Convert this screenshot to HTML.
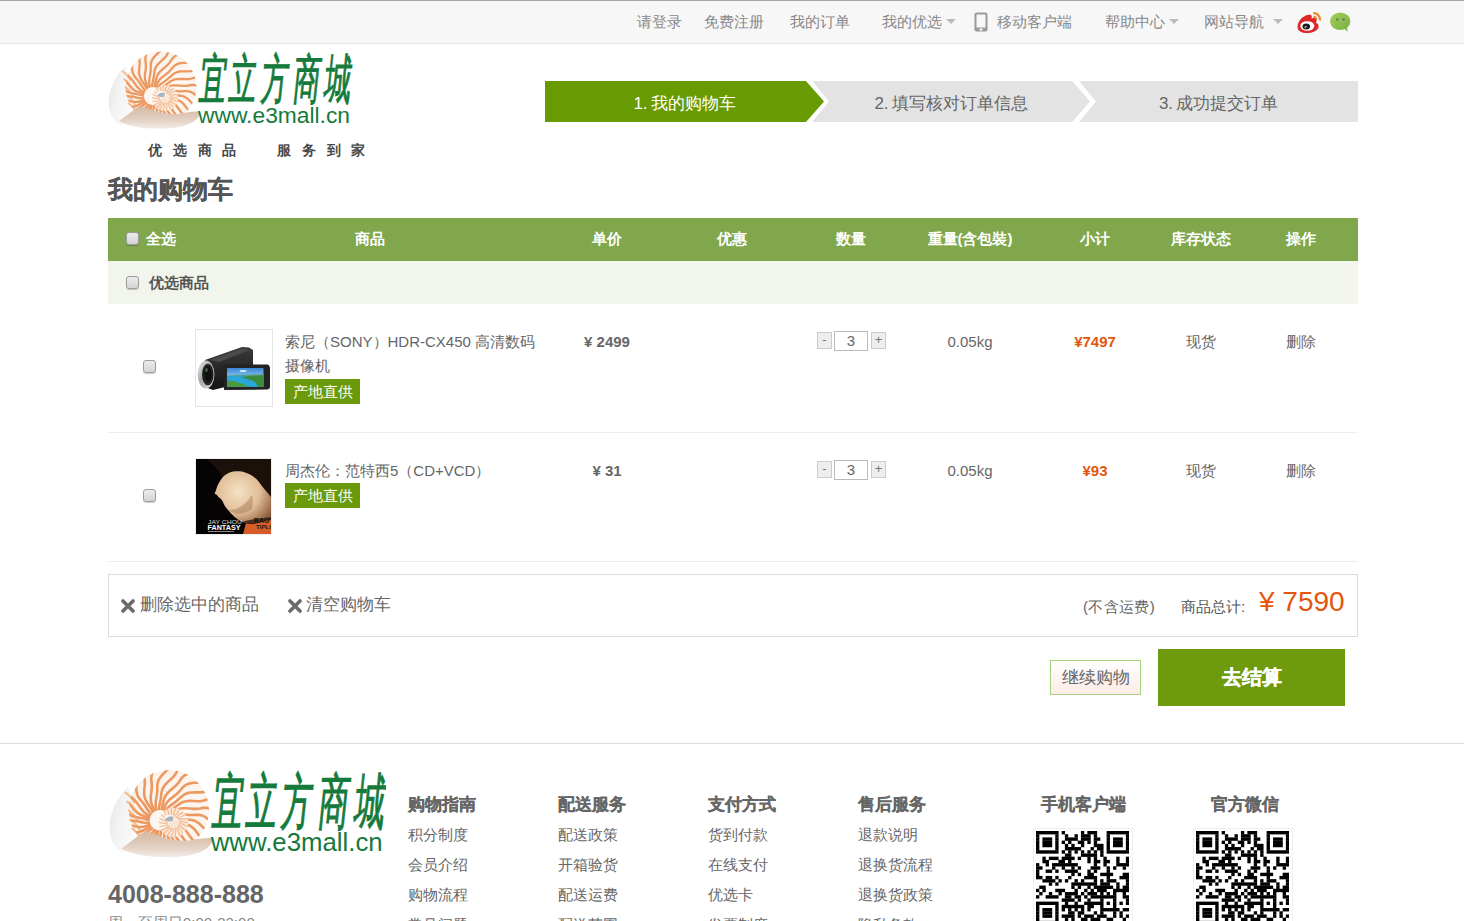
<!DOCTYPE html>
<html><head><meta charset="utf-8">
<style>
*{margin:0;padding:0;box-sizing:border-box}
html,body{width:1464px;height:921px;overflow:hidden;background:#fff}
body{position:relative;font-family:"Liberation Sans",sans-serif;color:#666;font-size:14px}
.a{position:absolute;white-space:nowrap}
.topbar{position:absolute;left:0;top:0;width:1464px;height:44px;background:#f7f7f7;border-top:1px solid #a8a8a8;border-bottom:1px solid #e6e6e6}
.tb{position:absolute;top:0;height:43px;line-height:43px;font-size:15px;color:#888}
.arr{position:absolute;width:0;height:0;border-left:5px solid transparent;border-right:5px solid transparent;border-top:5px solid #bbb}
.hd{position:absolute;top:216.5px;height:43px;line-height:43px;color:#fff;font-weight:bold;font-size:15px;white-space:nowrap}
.cb{position:absolute;width:13px;height:13px;border:1px solid #9c9c9c;border-radius:3px;background:linear-gradient(#ececec,#d4d4d4);box-shadow:0 1px 1px rgba(0,0,0,.2)}
.c{position:absolute;white-space:nowrap;text-align:center}
.tag{position:absolute;width:75px;height:25px;background:#6a9a0b;color:#fff;font-size:15px;line-height:25px;text-align:center}
.qbtn{position:absolute;width:15px;height:17px;background:#eee;border:1px solid #ccc;font-size:13px;line-height:14px;text-align:center;color:#777}
.qin{position:absolute;width:34px;height:20px;border:1px solid #bbb;background:#fff;font-size:15px;line-height:18px;text-align:center;color:#666}
.fh{-webkit-text-stroke:0.2px #666;position:absolute;top:791px;font-size:17px;font-weight:bold;color:#666;line-height:28px}
.fi{position:absolute;font-size:15px;color:#666;line-height:30px}
</style></head><body>

<!-- top bar -->
<div class="topbar"></div>
<div class="tb" style="left:637px">请登录</div>
<div class="tb" style="left:704px">免费注册</div>
<div class="tb" style="left:790px">我的订单</div>
<div class="tb" style="left:882px">我的优选</div>
<div class="arr" style="left:946px;top:19px"></div>
<svg class="a" style="left:974px;top:12px" width="14" height="20" viewBox="0 0 14 20"><rect x="0.5" y="0.5" width="13" height="19" rx="2" fill="#999"/><rect x="2.5" y="2.5" width="9" height="13" fill="#f7f7f7"/><rect x="5.5" y="16.5" width="3" height="2" fill="#f7f7f7"/></svg>
<div class="tb" style="left:997px">移动客户端</div>
<div class="tb" style="left:1105px">帮助中心</div>
<div class="arr" style="left:1169px;top:19px"></div>
<div class="tb" style="left:1204px">网站导航</div>
<div class="arr" style="left:1273px;top:19px"></div>
<!-- weibo -->
<svg class="a" style="left:1297px;top:11px" width="25" height="23" viewBox="0 0 25 23">
<path d="M3 9 C6 5 11 3 14 4 C15 4.5 15 6 14.5 7.5 C16.5 6.5 19 6.5 19.5 8.5 C20 10 19 11.5 19 12 C21 12.5 22 14 21.5 16.5 C20.5 20 15 22 10 22 C5 22 0.5 20 0.5 16 C0.5 13.5 1.5 11 3 9Z" fill="#dc2a2a"/>
<ellipse cx="10.3" cy="15" rx="7" ry="4.8" fill="#fff"/>
<ellipse cx="9.3" cy="15.6" rx="3.8" ry="3" fill="#1e1e1e"/>
<ellipse cx="8.6" cy="16" rx="1.3" ry="0.6" fill="#fff" transform="rotate(-25 8.6 16)"/>
<path d="M16.3 2.2 A6.3 6.3 0 0 1 23 9.5" stroke="#ec8a2c" stroke-width="2.2" fill="none"/>
<path d="M16.3 5.6 A3 3 0 0 1 19.6 8.8" stroke="#ec8a2c" stroke-width="1.8" fill="none"/>
</svg>
<!-- wechat -->
<svg class="a" style="left:1330px;top:12px" width="22" height="21" viewBox="0 0 22 21">
<defs><linearGradient id="wcg" x1="0" y1="0" x2="1" y2="1"><stop offset="0" stop-color="#a2d055"/><stop offset="1" stop-color="#78b044"/></linearGradient></defs>
<ellipse cx="10.2" cy="9.2" rx="10.1" ry="8.8" fill="url(#wcg)"/>
<path d="M14 16 L17.5 19.8 L17 15Z" fill="#7ab244"/>
<ellipse cx="7.2" cy="7.5" rx="1.3" ry="1.2" fill="#6c7a64"/><ellipse cx="13.6" cy="7.5" rx="1.3" ry="1.2" fill="#6c7a64"/>
</svg>

<!-- logo placeholder -->
<svg class="a" style="left:108px;top:49px" width="245" height="82" viewBox="0 0 245 82"><defs><radialGradient id="wh" cx="0.55" cy="0.5" r="0.6"><stop offset="0" stop-color="#fffaf4"/><stop offset="0.85" stop-color="#fbf3ec"/><stop offset="1" stop-color="#f4e2d4"/></radialGradient><linearGradient id="bod" x1="0" y1="0" x2="1" y2="0.3"><stop offset="0" stop-color="#e4e4e4"/><stop offset="0.35" stop-color="#f3f3f3"/><stop offset="1" stop-color="#ffffff"/></linearGradient><linearGradient id="sand" x1="0" y1="0" x2="0" y2="1"><stop offset="0" stop-color="#d6b8a2"/><stop offset="0.6" stop-color="#e2d0c3"/><stop offset="1" stop-color="#f3ede8"/></linearGradient><clipPath id="wc"><circle cx="53.0" cy="38.0" r="35.5"/></clipPath><filter id="sb" x="-5%" y="-5%" width="110%" height="110%"><feGaussianBlur stdDeviation="0.45"/></filter></defs><g filter="url(#sb)"><path d="M17 17 C6 28 -1 44 1 58 C2 68 8 74 13 76 L40 62 C30 50 24 36 17 17Z" fill="url(#bod)"/><circle cx="53.0" cy="38.0" r="35.5" fill="url(#wh)"/><g clip-path="url(#wc)"><path d="M54.0 47.0 L56.8 47.7 L59.5 48.5 L62.3 49.2 L65.0 49.8 L67.7 50.4 L70.4 51.3 L73.0 52.7 L75.4 54.8 L77.6 57.5 L79.6 60.2 L81.6 62.5 L83.9 64.4 L86.3 65.9 L88.6 67.6 L90.6 69.9" stroke="#ec9860" stroke-width="2.3" fill="none" stroke-linejoin="round"/><path d="M53.7 49.2 L56.4 50.1 L59.1 51.0 L61.7 51.9 L64.3 53.1 L66.6 54.9 L68.7 57.1 L70.6 59.7 L72.4 62.3 L74.3 64.6 L76.4 66.5 L78.6 68.3 L80.7 70.3 L82.2 73.0 L83.2 76.4 L83.5 80.4" stroke="#ec9860" stroke-width="2.3" fill="none" stroke-linejoin="round"/><path d="M53.3 50.6 L55.8 51.8 L58.1 53.4 L60.3 55.3 L62.2 57.6 L63.8 60.2 L65.5 62.7 L67.2 65.0 L69.2 67.0 L71.2 69.0 L72.9 71.4 L74.0 74.3 L74.5 77.7 L74.5 81.5 L74.3 85.3 L74.6 88.6" stroke="#ec9860" stroke-width="2.3" fill="none" stroke-linejoin="round"/><path d="M52.4 52.1 L54.4 54.1 L56.1 56.5 L57.6 59.0 L59.1 61.4 L60.8 63.8 L62.5 66.0 L64.2 68.2 L65.5 70.8 L66.2 73.8 L66.3 77.2 L66.0 80.8 L65.7 84.2 L65.9 87.3 L66.6 90.1 L67.5 92.8" stroke="#ec9860" stroke-width="2.3" fill="none" stroke-linejoin="round"/><path d="M50.9 53.8 L52.3 56.3 L53.7 58.8 L55.1 61.2 L56.6 63.6 L57.9 66.0 L58.9 68.8 L59.2 71.8 L59.0 75.1 L58.5 78.4 L58.2 81.6 L58.3 84.5 L58.8 87.3 L59.3 90.1 L59.3 93.0 L58.3 96.2" stroke="#ec9860" stroke-width="2.3" fill="none" stroke-linejoin="round"/><path d="M49.3 54.9 L50.5 57.4 L51.7 60.0 L52.7 62.6 L53.3 65.4 L53.3 68.4 L52.9 71.6 L52.3 74.6 L51.9 77.6 L51.9 80.5 L52.2 83.3 L52.3 86.1 L51.7 89.1 L50.2 92.1 L47.9 95.1 L45.1 98.0" stroke="#ec9860" stroke-width="2.3" fill="none" stroke-linejoin="round"/><path d="M48.0 55.5 L48.7 58.2 L49.0 61.1 L48.8 64.0 L48.3 66.9 L47.6 69.9 L47.1 72.7 L46.9 75.5 L46.9 78.3 L46.5 81.2 L45.5 84.0 L43.7 86.8 L41.1 89.4 L38.4 91.9 L36.0 94.4 L34.3 96.9" stroke="#ec9860" stroke-width="2.3" fill="none" stroke-linejoin="round"/><path d="M46.1 55.9 L45.8 58.8 L45.2 61.6 L44.5 64.4 L43.9 67.2 L43.5 69.9 L43.0 72.7 L42.3 75.5 L40.9 78.1 L38.8 80.6 L36.1 82.9 L33.5 85.1 L31.2 87.3 L29.6 89.7 L28.2 92.2 L26.7 94.6" stroke="#ec9860" stroke-width="2.3" fill="none" stroke-linejoin="round"/><path d="M43.8 55.9 L43.0 58.6 L42.2 61.3 L41.5 64.0 L40.7 66.7 L39.6 69.4 L37.9 71.8 L35.6 74.0 L33.0 76.0 L30.5 78.0 L28.3 80.0 L26.5 82.3 L24.9 84.6 L23.0 86.7 L20.3 88.4 L16.8 89.5" stroke="#ec9860" stroke-width="2.3" fill="none" stroke-linejoin="round"/><path d="M42.1 55.5 L41.1 58.1 L40.0 60.7 L38.5 63.2 L36.6 65.4 L34.3 67.3 L31.7 69.1 L29.3 70.9 L27.1 72.8 L25.2 74.9 L23.3 77.0 L21.0 78.8 L18.1 80.0 L14.5 80.6 L10.6 80.7 L6.8 80.8" stroke="#ec9860" stroke-width="2.3" fill="none" stroke-linejoin="round"/><path d="M40.8 54.9 L39.1 57.2 L37.0 59.2 L34.7 61.0 L32.2 62.6 L29.8 64.2 L27.5 66.0 L25.5 67.9 L23.3 69.7 L20.7 71.1 L17.7 71.9 L14.1 72.1 L10.5 71.9 L7.0 71.9 L3.9 72.2 L1.2 73.1" stroke="#ec9860" stroke-width="2.3" fill="none" stroke-linejoin="round"/><path d="M39.0 53.7 L36.7 55.3 L34.2 56.8 L31.8 58.3 L29.4 59.9 L27.2 61.5 L24.8 63.0 L22.0 64.0 L18.9 64.5 L15.5 64.3 L12.1 64.0 L8.9 63.8 L6.0 64.1 L3.2 64.8 L0.5 65.5 L-2.5 65.6" stroke="#ec9860" stroke-width="2.3" fill="none" stroke-linejoin="round"/><path d="M37.5 52.0 L35.1 53.4 L32.6 54.7 L30.2 56.1 L27.6 57.2 L24.7 57.9 L21.7 58.0 L18.5 57.6 L15.3 57.2 L12.3 56.9 L9.4 57.1 L6.6 57.6 L3.8 57.8 L0.8 57.3 L-2.4 55.9 L-5.6 53.6" stroke="#ec9860" stroke-width="2.3" fill="none" stroke-linejoin="round"/><path d="M36.8 50.7 L34.2 51.7 L31.5 52.5 L28.6 52.9 L25.6 52.8 L22.6 52.3 L19.6 51.7 L16.7 51.4 L13.9 51.4 L11.1 51.5 L8.3 51.3 L5.3 50.4 L2.4 48.5 L-0.4 46.0 L-3.1 43.3 L-5.7 41.1" stroke="#ec9860" stroke-width="2.3" fill="none" stroke-linejoin="round"/><path d="M36.3 49.2 L33.4 49.3 L30.5 49.0 L27.7 48.4 L24.8 47.8 L22.0 47.4 L19.2 47.2 L16.4 46.9 L13.6 46.3 L10.9 44.9 L8.2 42.8 L5.8 40.2 L3.5 37.6 L1.1 35.5 L-1.4 34.0 L-4.0 32.8" stroke="#ec9860" stroke-width="2.3" fill="none" stroke-linejoin="round"/><path d="M36.0 46.9 L33.2 46.2 L30.5 45.5 L27.7 44.9 L25.0 44.4 L22.2 43.8 L19.6 42.8 L17.0 41.1 L14.7 38.8 L12.6 36.2 L10.5 33.7 L8.3 31.6 L5.9 30.1 L3.5 28.6 L1.3 26.7 L-0.5 24.0" stroke="#ec9860" stroke-width="2.3" fill="none" stroke-linejoin="round"/><path d="M36.3 44.9 L33.6 44.0 L30.9 43.2 L28.3 42.2 L25.8 40.9 L23.5 38.9 L21.4 36.6 L19.5 34.0 L17.6 31.6 L15.6 29.6 L13.3 27.9 L11.1 26.1 L9.2 23.8 L7.9 20.8 L7.2 17.1 L6.9 13.1" stroke="#ec9860" stroke-width="2.3" fill="none" stroke-linejoin="round"/><path d="M36.7 43.5 L34.2 42.2 L31.9 40.6 L29.8 38.5 L28.0 36.2 L26.2 33.7 L24.5 31.3 L22.6 29.2 L20.6 27.3 L18.6 25.2 L17.1 22.7 L16.2 19.5 L15.9 15.9 L15.9 12.1 L15.8 8.6 L15.2 5.6" stroke="#ec9860" stroke-width="2.3" fill="none" stroke-linejoin="round"/><path d="M37.6 41.9 L35.7 39.8 L34.0 37.4 L32.4 35.0 L30.8 32.6 L29.1 30.4 L27.3 28.3 L25.7 25.9 L24.6 23.2 L24.1 20.0 L24.1 16.5 L24.3 13.0 L24.3 9.8 L23.8 6.9 L22.9 4.2 L22.1 1.5" stroke="#ec9860" stroke-width="2.3" fill="none" stroke-linejoin="round"/><path d="M39.2 40.2 L37.7 37.7 L36.3 35.3 L34.7 33.0 L33.2 30.6 L32.0 28.0 L31.2 25.2 L31.1 22.0 L31.3 18.7 L31.7 15.5 L31.7 12.5 L31.3 9.6 L30.7 6.9 L30.3 4.0 L30.7 1.0 L32.1 -2.3" stroke="#ec9860" stroke-width="2.3" fill="none" stroke-linejoin="round"/><path d="M40.6 39.1 L39.4 36.6 L38.2 34.1 L37.3 31.4 L36.9 28.5 L36.9 25.5 L37.4 22.4 L37.8 19.3 L37.9 16.4 L37.7 13.6 L37.4 10.8 L37.5 7.9 L38.4 4.9 L40.2 1.9 L42.7 -1.1 L45.3 -4.0" stroke="#ec9860" stroke-width="2.3" fill="none" stroke-linejoin="round"/><path d="M41.9 38.5 L41.4 35.8 L41.2 32.9 L41.4 30.0 L41.9 27.0 L42.4 24.1 L42.7 21.3 L42.7 18.5 L42.8 15.7 L43.3 12.8 L44.7 10.0 L46.8 7.2 L49.4 4.6 L51.9 2.1 L53.8 -0.4 L55.1 -3.0" stroke="#ec9860" stroke-width="2.3" fill="none" stroke-linejoin="round"/><path d="M44.0 38.1 L44.3 35.2 L44.9 32.4 L45.5 29.6 L45.9 26.8 L46.2 24.0 L46.7 21.3 L47.7 18.5 L49.4 15.9 L51.7 13.5 L54.2 11.2 L56.6 8.9 L58.5 6.6 L59.9 4.1 L61.2 1.6 L63.1 -0.7" stroke="#ec9860" stroke-width="2.3" fill="none" stroke-linejoin="round"/><path d="M46.2 38.1 L47.0 35.4 L47.6 32.6 L48.3 29.9 L49.1 27.2 L50.4 24.7 L52.3 22.3 L54.7 20.1 L57.2 18.1 L59.5 16.0 L61.4 13.9 L63.0 11.5 L64.7 9.2 L66.9 7.2 L69.9 5.8 L73.8 4.9" stroke="#ec9860" stroke-width="2.3" fill="none" stroke-linejoin="round"/><path d="M47.8 38.4 L48.8 35.8 L50.0 33.3 L51.5 30.9 L53.6 28.7 L56.0 26.8 L58.4 25.0 L60.7 23.1 L62.6 21.0 L64.4 18.9 L66.4 16.8 L69.0 15.2 L72.2 14.2 L75.9 13.8 L79.8 13.6 L83.3 13.3" stroke="#ec9860" stroke-width="2.3" fill="none" stroke-linejoin="round"/><path d="M49.2 39.1 L51.0 36.8 L53.1 34.9 L55.5 33.1 L57.9 31.4 L60.1 29.7 L62.2 27.8 L64.3 25.9 L66.6 24.2 L69.3 23.0 L72.6 22.4 L76.2 22.3 L79.7 22.3 L83.0 22.1 L85.8 21.4 L88.5 20.3" stroke="#ec9860" stroke-width="2.3" fill="none" stroke-linejoin="round"/><path d="M51.1 40.4 L53.4 38.7 L55.8 37.2 L58.1 35.6 L60.4 33.9 L62.7 32.3 L65.2 30.9 L68.1 30.1 L71.3 29.8 L74.7 30.0 L78.0 30.2 L81.0 30.1 L83.8 29.5 L86.5 28.7 L89.4 28.2 L92.5 28.5" stroke="#ec9860" stroke-width="2.3" fill="none" stroke-linejoin="round"/><path d="M52.5 42.0 L54.9 40.5 L57.3 39.1 L59.8 37.8 L62.4 36.8 L65.4 36.3 L68.5 36.3 L71.7 36.6 L74.7 36.9 L77.7 36.9 L80.5 36.5 L83.2 36.0 L86.1 36.0 L89.2 36.8 L92.5 38.6 L95.7 41.1" stroke="#ec9860" stroke-width="2.3" fill="none" stroke-linejoin="round"/><path d="M53.2 43.2 L55.8 42.2 L58.5 41.5 L61.4 41.3 L64.4 41.5 L67.4 41.9 L70.4 42.3 L73.2 42.3 L76.0 42.2 L78.8 42.1 L81.7 42.6 L84.7 43.8 L87.6 46.0 L90.4 48.5 L93.0 50.9 L95.7 52.7" stroke="#ec9860" stroke-width="2.3" fill="none" stroke-linejoin="round"/><path d="M53.7 44.9 L56.6 44.8 L59.5 45.2 L62.3 45.7 L65.2 46.1 L68.0 46.4 L70.8 46.5 L73.6 46.8 L76.4 47.7 L79.1 49.4 L81.7 51.7 L84.1 54.2 L86.5 56.5 L89.0 58.2 L91.6 59.5 L94.1 60.6" stroke="#ec9860" stroke-width="2.3" fill="none" stroke-linejoin="round"/></g><circle cx="57.0" cy="49.0" r="13.0" fill="#fbf1e8" opacity="0.85"/><path d="M62.0 49.0 L69.4 52.8" stroke="#f2b080" stroke-width="1.1" opacity="0.8"/><path d="M61.8 50.4 L67.8 56.2" stroke="#f2b080" stroke-width="1.1" opacity="0.8"/><path d="M61.2 51.7 L65.4 58.9" stroke="#f2b080" stroke-width="1.1" opacity="0.8"/><path d="M60.3 52.8 L62.2 60.9" stroke="#f2b080" stroke-width="1.1" opacity="0.8"/><path d="M59.1 53.5 L58.7 61.9" stroke="#f2b080" stroke-width="1.1" opacity="0.8"/><path d="M57.7 53.9 L55.0 61.8" stroke="#f2b080" stroke-width="1.1" opacity="0.8"/><path d="M56.3 53.9 L51.4 60.7" stroke="#f2b080" stroke-width="1.1" opacity="0.8"/><path d="M54.9 53.5 L48.3 58.7" stroke="#f2b080" stroke-width="1.1" opacity="0.8"/><path d="M53.7 52.8 L46.0 55.9" stroke="#f2b080" stroke-width="1.1" opacity="0.8"/><path d="M52.8 51.7 L44.5 52.5" stroke="#f2b080" stroke-width="1.1" opacity="0.8"/><path d="M52.2 50.4 L44.0 48.8" stroke="#f2b080" stroke-width="1.1" opacity="0.8"/><path d="M52.0 49.0 L44.6 45.2" stroke="#f2b080" stroke-width="1.1" opacity="0.8"/><path d="M52.2 47.6 L46.2 41.8" stroke="#f2b080" stroke-width="1.1" opacity="0.8"/><path d="M52.8 46.3 L48.6 39.1" stroke="#f2b080" stroke-width="1.1" opacity="0.8"/><path d="M53.7 45.2 L51.8 37.1" stroke="#f2b080" stroke-width="1.1" opacity="0.8"/><path d="M54.9 44.5 L55.3 36.1" stroke="#f2b080" stroke-width="1.1" opacity="0.8"/><path d="M56.3 44.1 L59.0 36.2" stroke="#f2b080" stroke-width="1.1" opacity="0.8"/><path d="M57.7 44.1 L62.6 37.3" stroke="#f2b080" stroke-width="1.1" opacity="0.8"/><path d="M59.1 44.5 L65.7 39.3" stroke="#f2b080" stroke-width="1.1" opacity="0.8"/><path d="M60.3 45.2 L68.0 42.1" stroke="#f2b080" stroke-width="1.1" opacity="0.8"/><path d="M61.2 46.3 L69.5 45.5" stroke="#f2b080" stroke-width="1.1" opacity="0.8"/><path d="M61.8 47.6 L70.0 49.2" stroke="#f2b080" stroke-width="1.1" opacity="0.8"/><path d="M14.0 22.0 q5 3 9 10" stroke="#efa26a" stroke-width="1.8" fill="none" opacity="0.7"/><path d="M15.5 30.0 q5 3 9 10" stroke="#efa26a" stroke-width="1.8" fill="none" opacity="0.7"/><path d="M17.0 38.0 q5 3 9 10" stroke="#efa26a" stroke-width="1.8" fill="none" opacity="0.7"/><path d="M18.5 46.0 q5 3 9 10" stroke="#efa26a" stroke-width="1.8" fill="none" opacity="0.7"/><path d="M20.0 54.0 q5 3 9 10" stroke="#efa26a" stroke-width="1.8" fill="none" opacity="0.7"/><path d="M11 72 C20 66 28 58 34 57 C45 62 60 66 70 65 C80 63 88 62 92 63 C91 72 80 78 60 79.5 C40 80.5 20 78 11 72Z" fill="url(#sand)"/><ellipse cx="53.5" cy="45.0" rx="4.5" ry="3.2" fill="#fbf6f0"/><path d="M49.0 46.5 q4 -4.5 8 -2.5 l-0.5 3.5 q-4 1.5 -7.5 -1z" fill="#a8b4c0"/></g><text x="90.0" y="49" font-family="Liberation Sans" font-size="54" fill="#157a3b" stroke="#157a3b" stroke-width="1.1" textLength="27" lengthAdjust="spacingAndGlyphs" transform="skewX(-6) translate(5,0)">宜</text><text x="120.3" y="49" font-family="Liberation Sans" font-size="54" fill="#157a3b" stroke="#157a3b" stroke-width="1.1" textLength="27" lengthAdjust="spacingAndGlyphs" transform="skewX(-6) translate(5,0)">立</text><text x="151.7" y="49" font-family="Liberation Sans" font-size="54" fill="#157a3b" stroke="#157a3b" stroke-width="1.1" textLength="27" lengthAdjust="spacingAndGlyphs" transform="skewX(-6) translate(5,0)">方</text><text x="184.2" y="49" font-family="Liberation Sans" font-size="54" fill="#157a3b" stroke="#157a3b" stroke-width="1.1" textLength="27" lengthAdjust="spacingAndGlyphs" transform="skewX(-6) translate(5,0)">商</text><text x="215.6" y="49" font-family="Liberation Sans" font-size="54" fill="#157a3b" stroke="#157a3b" stroke-width="1.1" textLength="27" lengthAdjust="spacingAndGlyphs" transform="skewX(-6) translate(5,0)">城</text><text x="90" y="73.8" font-family="Liberation Sans" font-size="22" fill="#157a3b" textLength="152" lengthAdjust="spacingAndGlyphs">www.e3mall.cn</text></svg>

<!-- steps -->
<svg class="a" style="left:0;top:0" width="1464" height="130">
<polygon points="545,81 806,81 824,101.5 806,122 545,122" fill="#689a02"/>
<polygon points="812,81 1072,81 1090,101.5 1072,122 812,122 829,101.5" fill="#e3e3e3"/>
<polygon points="1079,81 1358,81 1358,122 1079,122 1096,101.5" fill="#e3e3e3"/>
</svg>
<div class="c" style="left:545px;width:279px;top:83px;line-height:41px;font-size:17px;color:#fff"><span style="margin-right:3px">1.</span>我的购物车</div>
<div class="c" style="left:812px;width:278px;top:83px;line-height:41px;font-size:17px;color:#666"><span style="margin-right:3px">2.</span>填写核对订单信息</div>
<div class="c" style="left:1079px;width:279px;top:83px;line-height:41px;font-size:17px;color:#666"><span style="margin-right:3px">3.</span>成功提交订单</div>

<div class="a" style="left:148px;top:140px;font-size:14px;line-height:20px;font-weight:bold;color:#4a4a4a;letter-spacing:10.8px">优选商品</div>
<div class="a" style="left:277px;top:140px;font-size:14px;line-height:20px;font-weight:bold;color:#4a4a4a;letter-spacing:10.8px">服务到家</div>
<div class="a" style="left:108px;top:172px;font-size:25px;line-height:34px;font-weight:bold;color:#555;-webkit-text-stroke:0.2px #555">我的购物车</div>

<!-- table header -->
<div class="a" style="left:108px;top:218px;width:1250px;height:43px;background:#80a74c"></div>
<div class="cb" style="left:126px;top:232px"></div>
<div class="hd" style="left:146px">全选</div>
<div class="hd c" style="left:320px;width:100px">商品</div>
<div class="hd c" style="left:557px;width:100px">单价</div>
<div class="hd c" style="left:682px;width:100px">优惠</div>
<div class="hd c" style="left:801px;width:100px">数量</div>
<div class="hd c" style="left:870px;width:200px">重量(含包裝)</div>
<div class="hd c" style="left:1045px;width:100px">小计</div>
<div class="hd c" style="left:1151px;width:100px">库存状态</div>
<div class="hd c" style="left:1251px;width:100px">操作</div>

<div class="a" style="left:108px;top:261px;width:1250px;height:43px;background:#f2f5ec"></div>
<div class="cb" style="left:126px;top:276px"></div>
<div class="a" style="left:149px;top:261px;line-height:43px;font-size:15px;font-weight:bold;color:#555">优选商品</div>

<!-- row 1 -->
<div class="cb" style="left:143px;top:360px"></div>
<div class="a" style="left:195px;top:329px;width:78px;height:78px;border:1px solid #e5e5e5;background:#fff"></div>
<svg class="a" style="left:195px;top:329px" width="78" height="78" viewBox="0 0 78 78">
<defs>
<linearGradient id="sky" x1="0" y1="0" x2="0" y2="1"><stop offset="0" stop-color="#3a86d4"/><stop offset="0.4" stop-color="#7ab8ea"/><stop offset="0.5" stop-color="#2aa6d8"/><stop offset="1" stop-color="#2a98c0"/></linearGradient>
<linearGradient id="silv" x1="0" y1="0" x2="1" y2="1"><stop offset="0" stop-color="#f0f0f0"/><stop offset="0.45" stop-color="#a8a8a8"/><stop offset="1" stop-color="#e0e0e0"/></linearGradient>
<linearGradient id="bdy" x1="0" y1="0" x2="0" y2="1"><stop offset="0" stop-color="#3a3a3a"/><stop offset="1" stop-color="#141414"/></linearGradient>
</defs>
<path d="M10 31 L47 18 L54 18.5 L58 21 L58 39 L30 39 L30 58 L18 61 L10 58 Z" fill="url(#bdy)"/>
<path d="M14 31 L47 19.5 L55 21 L24 33Z" fill="#4a4a4a"/>
<ellipse cx="11" cy="45.5" rx="8.4" ry="14" fill="url(#silv)"/>
<ellipse cx="12.8" cy="45.5" rx="5.8" ry="10.8" fill="#222"/>
<ellipse cx="13" cy="45" rx="3.8" ry="7.5" fill="#0e120e"/>
<ellipse cx="11.5" cy="41" rx="1.2" ry="2" fill="#4a6a4a"/>
<path d="M28 35.5 L72.5 35.5 Q75 36 75 40 L75 57 Q75 60.5 72 60.5 L29 61 Z" fill="#232323"/>
<rect x="32" y="39" width="36.5" height="18.8" fill="url(#sky)"/>
<path d="M32 47 Q45 46 56 46.5 Q62 47 68.5 45.5 L68.5 57.8 L32 57.8 Z" fill="#28a8d8"/>
<path d="M46 48.5 Q57 46 68.5 46 L68.5 57.8 L62 57.8 Q64 52 46 48.5Z" fill="#3c8c3c"/>
<path d="M32 52 Q38 51 43 53.5 Q49 55 54 57.8 L32 57.8Z" fill="#4c9a3e"/>
<path d="M32 46.5 L68.5 45 L68.5 46.5 L32 47.5Z" fill="#5a9a5a" opacity="0.6"/>
<ellipse cx="48" cy="42" rx="3.5" ry="1" fill="#e8f2fa" opacity="0.9"/>
</svg>

<div class="a" style="left:285px;top:330px;font-size:15px;line-height:24px;color:#666;white-space:normal;width:260px">索尼（SONY）HDR-CX450 高清数码<br>摄像机</div>
<div class="tag" style="left:285px;top:379px">产地直供</div>
<div class="c" style="left:557px;width:100px;top:330px;line-height:24px;font-size:15px;font-weight:bold;color:#666">¥ 2499</div>
<div class="qbtn" style="left:817px;top:332px">-</div>
<div class="qin" style="left:834px;top:331px">3</div>
<div class="qbtn" style="left:871px;top:332px">+</div>
<div class="c" style="left:920px;width:100px;top:330px;line-height:24px;font-size:15px;color:#666">0.05kg</div>
<div class="c" style="left:1045px;width:100px;top:330px;line-height:24px;font-size:15px;font-weight:bold;color:#e4560e">¥7497</div>
<div class="c" style="left:1151px;width:100px;top:330px;line-height:24px;font-size:15px;color:#666">现货</div>
<div class="c" style="left:1251px;width:100px;top:330px;line-height:24px;font-size:15px;color:#666">删除</div>
<div class="a" style="left:108px;top:432px;width:1250px;height:1px;background:#e8f2ec"></div>

<!-- row 2 -->
<div class="cb" style="left:143px;top:489px"></div>
<div class="a" style="left:195px;top:458px;width:77px;height:77px;border:1px solid #eee;background:#fff"></div>
<svg class="a" style="left:196px;top:459px" width="75" height="75" viewBox="0 0 75 75">
<defs>
<radialGradient id="skin" cx="0.42" cy="0.45" r="0.7"><stop offset="0" stop-color="#f5e2c4"/><stop offset="0.55" stop-color="#e0bd96"/><stop offset="1" stop-color="#8a5a3a"/></radialGradient>
</defs>
<rect width="75" height="75" fill="#050303"/>
<path d="M26 19 C24 22 22 25 21 28 C20 31 19.5 33 18.5 34.5 L21 36 C22 38 24 39 25 40 L27 43 C28 46 30 49 32 51 C36 56 40 60 46 63 L75 63 L75 22 C68 14 55 8 45 8 C37 8 30 12 26 19Z" fill="url(#skin)"/>
<path d="M32 51 C40 52 50 46 56 36 C57 40 57 46 56 50 C48 56 40 56 32 51Z" fill="#8a5c3e" opacity="0.35"/>
<path d="M10 0 L75 0 L75 38 C72 34 67 29 63 23 C59 18 53 14 46 12.5 C38 11.5 31 13 26 19 C24 12 17 5 10 0Z" fill="#1b100a"/>
<path d="M47 75 L50 64 C56 66 62 64 68 62 L75 61 L75 75Z" fill="#d65c28"/>
<path d="M46 63 C52 66 60 64 75 61 L75 58 C62 60 54 60 46 63Z" fill="#4a2e20"/>
<text x="12" y="64.5" font-family="Liberation Sans" font-size="6" fill="#dddddd" textLength="34" lengthAdjust="spacingAndGlyphs">JAY CHOU</text>
<text x="11.5" y="70.5" font-family="Liberation Sans" font-weight="bold" font-size="7" fill="#ffffff" textLength="33" lengthAdjust="spacingAndGlyphs">FANTASY</text>
<rect x="12" y="72" width="26" height="1" fill="#888"/>
<text x="58" y="64" font-family="Liberation Sans" font-weight="bold" font-size="6.5" fill="#1a1410" textLength="17" lengthAdjust="spacingAndGlyphs">BAO'</text>
<text x="60" y="70" font-family="Liberation Sans" font-weight="bold" font-size="6" fill="#2a1a12" textLength="15" lengthAdjust="spacingAndGlyphs">TIPLI</text>
</svg>

<div class="a" style="left:285px;top:459px;font-size:15px;line-height:24px;color:#666">周杰伦：范特西5（CD+VCD）</div>
<div class="tag" style="left:285px;top:483px">产地直供</div>
<div class="c" style="left:557px;width:100px;top:459px;line-height:24px;font-size:15px;font-weight:bold;color:#666">¥ 31</div>
<div class="qbtn" style="left:817px;top:461px">-</div>
<div class="qin" style="left:834px;top:460px">3</div>
<div class="qbtn" style="left:871px;top:461px">+</div>
<div class="c" style="left:920px;width:100px;top:459px;line-height:24px;font-size:15px;color:#666">0.05kg</div>
<div class="c" style="left:1045px;width:100px;top:459px;line-height:24px;font-size:15px;font-weight:bold;color:#e4560e">¥93</div>
<div class="c" style="left:1151px;width:100px;top:459px;line-height:24px;font-size:15px;color:#666">现货</div>
<div class="c" style="left:1251px;width:100px;top:459px;line-height:24px;font-size:15px;color:#666">删除</div>
<div class="a" style="left:108px;top:561px;width:1250px;height:1px;background:#e8f2ec"></div>

<!-- action bar -->
<div class="a" style="left:108px;top:574px;width:1250px;height:63px;border:1px solid #dcdcdc"></div>
<svg class="a" style="left:121px;top:599px" width="14" height="14" viewBox="0 0 14 14"><path d="M2 2 L12 12 M12 2 L2 12" stroke="#6a6a6a" stroke-width="3.6" stroke-linecap="round"/></svg><div class="a" style="left:140px;top:590px;font-size:17px;line-height:30px;color:#666">删除选中的商品</div>
<svg class="a" style="left:288px;top:599px" width="14" height="14" viewBox="0 0 14 14"><path d="M2 2 L12 12 M12 2 L2 12" stroke="#6a6a6a" stroke-width="3.6" stroke-linecap="round"/></svg><div class="a" style="left:306px;top:590px;font-size:17px;line-height:30px;color:#666">清空购物车</div>
<div class="a" style="left:1083px;top:592px;font-size:15px;line-height:30px;color:#666;letter-spacing:0.35px">(不含运费)</div>
<div class="a" style="left:1181px;top:592px;font-size:15px;line-height:30px;color:#555">商品总计:</div>
<div class="a" style="left:1259px;top:584px;font-size:28px;line-height:36px;color:#e4560e">¥ 7590</div>

<div class="a" style="left:1050px;top:660px;width:91px;height:35px;border:1px solid #a9d27e;background:linear-gradient(#fff,#fcece6);font-size:17px;line-height:33px;text-align:center;color:#666">继续购物</div>
<div class="a" style="left:1158px;top:649px;width:187px;height:57px;background:#6e9a0e;color:#fff;font-weight:bold;font-size:20px;line-height:57px;text-align:center;-webkit-text-stroke:0.3px #fff">去结算</div>

<!-- footer -->
<div class="a" style="left:0;top:743px;width:1464px;height:1px;background:#ddd"></div>
<svg class="a" style="left:109px;top:767px" width="277" height="93" viewBox="0 0 245 82"><defs><radialGradient id="wh2" cx="0.55" cy="0.5" r="0.6"><stop offset="0" stop-color="#fffaf4"/><stop offset="0.85" stop-color="#fbf3ec"/><stop offset="1" stop-color="#f4e2d4"/></radialGradient><linearGradient id="bod2" x1="0" y1="0" x2="1" y2="0.3"><stop offset="0" stop-color="#e4e4e4"/><stop offset="0.35" stop-color="#f3f3f3"/><stop offset="1" stop-color="#ffffff"/></linearGradient><linearGradient id="sand2" x1="0" y1="0" x2="0" y2="1"><stop offset="0" stop-color="#d6b8a2"/><stop offset="0.6" stop-color="#e2d0c3"/><stop offset="1" stop-color="#f3ede8"/></linearGradient><clipPath id="wc2"><circle cx="53.0" cy="38.0" r="35.5"/></clipPath><filter id="sb2" x="-5%" y="-5%" width="110%" height="110%"><feGaussianBlur stdDeviation="0.45"/></filter></defs><g filter="url(#sb2)"><path d="M17 17 C6 28 -1 44 1 58 C2 68 8 74 13 76 L40 62 C30 50 24 36 17 17Z" fill="url(#bod2)"/><circle cx="53.0" cy="38.0" r="35.5" fill="url(#wh2)"/><g clip-path="url(#wc2)"><path d="M54.0 47.0 L56.8 47.7 L59.5 48.5 L62.3 49.2 L65.0 49.8 L67.7 50.4 L70.4 51.3 L73.0 52.7 L75.4 54.8 L77.6 57.5 L79.6 60.2 L81.6 62.5 L83.9 64.4 L86.3 65.9 L88.6 67.6 L90.6 69.9" stroke="#ec9860" stroke-width="2.3" fill="none" stroke-linejoin="round"/><path d="M53.7 49.2 L56.4 50.1 L59.1 51.0 L61.7 51.9 L64.3 53.1 L66.6 54.9 L68.7 57.1 L70.6 59.7 L72.4 62.3 L74.3 64.6 L76.4 66.5 L78.6 68.3 L80.7 70.3 L82.2 73.0 L83.2 76.4 L83.5 80.4" stroke="#ec9860" stroke-width="2.3" fill="none" stroke-linejoin="round"/><path d="M53.3 50.6 L55.8 51.8 L58.1 53.4 L60.3 55.3 L62.2 57.6 L63.8 60.2 L65.5 62.7 L67.2 65.0 L69.2 67.0 L71.2 69.0 L72.9 71.4 L74.0 74.3 L74.5 77.7 L74.5 81.5 L74.3 85.3 L74.6 88.6" stroke="#ec9860" stroke-width="2.3" fill="none" stroke-linejoin="round"/><path d="M52.4 52.1 L54.4 54.1 L56.1 56.5 L57.6 59.0 L59.1 61.4 L60.8 63.8 L62.5 66.0 L64.2 68.2 L65.5 70.8 L66.2 73.8 L66.3 77.2 L66.0 80.8 L65.7 84.2 L65.9 87.3 L66.6 90.1 L67.5 92.8" stroke="#ec9860" stroke-width="2.3" fill="none" stroke-linejoin="round"/><path d="M50.9 53.8 L52.3 56.3 L53.7 58.8 L55.1 61.2 L56.6 63.6 L57.9 66.0 L58.9 68.8 L59.2 71.8 L59.0 75.1 L58.5 78.4 L58.2 81.6 L58.3 84.5 L58.8 87.3 L59.3 90.1 L59.3 93.0 L58.3 96.2" stroke="#ec9860" stroke-width="2.3" fill="none" stroke-linejoin="round"/><path d="M49.3 54.9 L50.5 57.4 L51.7 60.0 L52.7 62.6 L53.3 65.4 L53.3 68.4 L52.9 71.6 L52.3 74.6 L51.9 77.6 L51.9 80.5 L52.2 83.3 L52.3 86.1 L51.7 89.1 L50.2 92.1 L47.9 95.1 L45.1 98.0" stroke="#ec9860" stroke-width="2.3" fill="none" stroke-linejoin="round"/><path d="M48.0 55.5 L48.7 58.2 L49.0 61.1 L48.8 64.0 L48.3 66.9 L47.6 69.9 L47.1 72.7 L46.9 75.5 L46.9 78.3 L46.5 81.2 L45.5 84.0 L43.7 86.8 L41.1 89.4 L38.4 91.9 L36.0 94.4 L34.3 96.9" stroke="#ec9860" stroke-width="2.3" fill="none" stroke-linejoin="round"/><path d="M46.1 55.9 L45.8 58.8 L45.2 61.6 L44.5 64.4 L43.9 67.2 L43.5 69.9 L43.0 72.7 L42.3 75.5 L40.9 78.1 L38.8 80.6 L36.1 82.9 L33.5 85.1 L31.2 87.3 L29.6 89.7 L28.2 92.2 L26.7 94.6" stroke="#ec9860" stroke-width="2.3" fill="none" stroke-linejoin="round"/><path d="M43.8 55.9 L43.0 58.6 L42.2 61.3 L41.5 64.0 L40.7 66.7 L39.6 69.4 L37.9 71.8 L35.6 74.0 L33.0 76.0 L30.5 78.0 L28.3 80.0 L26.5 82.3 L24.9 84.6 L23.0 86.7 L20.3 88.4 L16.8 89.5" stroke="#ec9860" stroke-width="2.3" fill="none" stroke-linejoin="round"/><path d="M42.1 55.5 L41.1 58.1 L40.0 60.7 L38.5 63.2 L36.6 65.4 L34.3 67.3 L31.7 69.1 L29.3 70.9 L27.1 72.8 L25.2 74.9 L23.3 77.0 L21.0 78.8 L18.1 80.0 L14.5 80.6 L10.6 80.7 L6.8 80.8" stroke="#ec9860" stroke-width="2.3" fill="none" stroke-linejoin="round"/><path d="M40.8 54.9 L39.1 57.2 L37.0 59.2 L34.7 61.0 L32.2 62.6 L29.8 64.2 L27.5 66.0 L25.5 67.9 L23.3 69.7 L20.7 71.1 L17.7 71.9 L14.1 72.1 L10.5 71.9 L7.0 71.9 L3.9 72.2 L1.2 73.1" stroke="#ec9860" stroke-width="2.3" fill="none" stroke-linejoin="round"/><path d="M39.0 53.7 L36.7 55.3 L34.2 56.8 L31.8 58.3 L29.4 59.9 L27.2 61.5 L24.8 63.0 L22.0 64.0 L18.9 64.5 L15.5 64.3 L12.1 64.0 L8.9 63.8 L6.0 64.1 L3.2 64.8 L0.5 65.5 L-2.5 65.6" stroke="#ec9860" stroke-width="2.3" fill="none" stroke-linejoin="round"/><path d="M37.5 52.0 L35.1 53.4 L32.6 54.7 L30.2 56.1 L27.6 57.2 L24.7 57.9 L21.7 58.0 L18.5 57.6 L15.3 57.2 L12.3 56.9 L9.4 57.1 L6.6 57.6 L3.8 57.8 L0.8 57.3 L-2.4 55.9 L-5.6 53.6" stroke="#ec9860" stroke-width="2.3" fill="none" stroke-linejoin="round"/><path d="M36.8 50.7 L34.2 51.7 L31.5 52.5 L28.6 52.9 L25.6 52.8 L22.6 52.3 L19.6 51.7 L16.7 51.4 L13.9 51.4 L11.1 51.5 L8.3 51.3 L5.3 50.4 L2.4 48.5 L-0.4 46.0 L-3.1 43.3 L-5.7 41.1" stroke="#ec9860" stroke-width="2.3" fill="none" stroke-linejoin="round"/><path d="M36.3 49.2 L33.4 49.3 L30.5 49.0 L27.7 48.4 L24.8 47.8 L22.0 47.4 L19.2 47.2 L16.4 46.9 L13.6 46.3 L10.9 44.9 L8.2 42.8 L5.8 40.2 L3.5 37.6 L1.1 35.5 L-1.4 34.0 L-4.0 32.8" stroke="#ec9860" stroke-width="2.3" fill="none" stroke-linejoin="round"/><path d="M36.0 46.9 L33.2 46.2 L30.5 45.5 L27.7 44.9 L25.0 44.4 L22.2 43.8 L19.6 42.8 L17.0 41.1 L14.7 38.8 L12.6 36.2 L10.5 33.7 L8.3 31.6 L5.9 30.1 L3.5 28.6 L1.3 26.7 L-0.5 24.0" stroke="#ec9860" stroke-width="2.3" fill="none" stroke-linejoin="round"/><path d="M36.3 44.9 L33.6 44.0 L30.9 43.2 L28.3 42.2 L25.8 40.9 L23.5 38.9 L21.4 36.6 L19.5 34.0 L17.6 31.6 L15.6 29.6 L13.3 27.9 L11.1 26.1 L9.2 23.8 L7.9 20.8 L7.2 17.1 L6.9 13.1" stroke="#ec9860" stroke-width="2.3" fill="none" stroke-linejoin="round"/><path d="M36.7 43.5 L34.2 42.2 L31.9 40.6 L29.8 38.5 L28.0 36.2 L26.2 33.7 L24.5 31.3 L22.6 29.2 L20.6 27.3 L18.6 25.2 L17.1 22.7 L16.2 19.5 L15.9 15.9 L15.9 12.1 L15.8 8.6 L15.2 5.6" stroke="#ec9860" stroke-width="2.3" fill="none" stroke-linejoin="round"/><path d="M37.6 41.9 L35.7 39.8 L34.0 37.4 L32.4 35.0 L30.8 32.6 L29.1 30.4 L27.3 28.3 L25.7 25.9 L24.6 23.2 L24.1 20.0 L24.1 16.5 L24.3 13.0 L24.3 9.8 L23.8 6.9 L22.9 4.2 L22.1 1.5" stroke="#ec9860" stroke-width="2.3" fill="none" stroke-linejoin="round"/><path d="M39.2 40.2 L37.7 37.7 L36.3 35.3 L34.7 33.0 L33.2 30.6 L32.0 28.0 L31.2 25.2 L31.1 22.0 L31.3 18.7 L31.7 15.5 L31.7 12.5 L31.3 9.6 L30.7 6.9 L30.3 4.0 L30.7 1.0 L32.1 -2.3" stroke="#ec9860" stroke-width="2.3" fill="none" stroke-linejoin="round"/><path d="M40.6 39.1 L39.4 36.6 L38.2 34.1 L37.3 31.4 L36.9 28.5 L36.9 25.5 L37.4 22.4 L37.8 19.3 L37.9 16.4 L37.7 13.6 L37.4 10.8 L37.5 7.9 L38.4 4.9 L40.2 1.9 L42.7 -1.1 L45.3 -4.0" stroke="#ec9860" stroke-width="2.3" fill="none" stroke-linejoin="round"/><path d="M41.9 38.5 L41.4 35.8 L41.2 32.9 L41.4 30.0 L41.9 27.0 L42.4 24.1 L42.7 21.3 L42.7 18.5 L42.8 15.7 L43.3 12.8 L44.7 10.0 L46.8 7.2 L49.4 4.6 L51.9 2.1 L53.8 -0.4 L55.1 -3.0" stroke="#ec9860" stroke-width="2.3" fill="none" stroke-linejoin="round"/><path d="M44.0 38.1 L44.3 35.2 L44.9 32.4 L45.5 29.6 L45.9 26.8 L46.2 24.0 L46.7 21.3 L47.7 18.5 L49.4 15.9 L51.7 13.5 L54.2 11.2 L56.6 8.9 L58.5 6.6 L59.9 4.1 L61.2 1.6 L63.1 -0.7" stroke="#ec9860" stroke-width="2.3" fill="none" stroke-linejoin="round"/><path d="M46.2 38.1 L47.0 35.4 L47.6 32.6 L48.3 29.9 L49.1 27.2 L50.4 24.7 L52.3 22.3 L54.7 20.1 L57.2 18.1 L59.5 16.0 L61.4 13.9 L63.0 11.5 L64.7 9.2 L66.9 7.2 L69.9 5.8 L73.8 4.9" stroke="#ec9860" stroke-width="2.3" fill="none" stroke-linejoin="round"/><path d="M47.8 38.4 L48.8 35.8 L50.0 33.3 L51.5 30.9 L53.6 28.7 L56.0 26.8 L58.4 25.0 L60.7 23.1 L62.6 21.0 L64.4 18.9 L66.4 16.8 L69.0 15.2 L72.2 14.2 L75.9 13.8 L79.8 13.6 L83.3 13.3" stroke="#ec9860" stroke-width="2.3" fill="none" stroke-linejoin="round"/><path d="M49.2 39.1 L51.0 36.8 L53.1 34.9 L55.5 33.1 L57.9 31.4 L60.1 29.7 L62.2 27.8 L64.3 25.9 L66.6 24.2 L69.3 23.0 L72.6 22.4 L76.2 22.3 L79.7 22.3 L83.0 22.1 L85.8 21.4 L88.5 20.3" stroke="#ec9860" stroke-width="2.3" fill="none" stroke-linejoin="round"/><path d="M51.1 40.4 L53.4 38.7 L55.8 37.2 L58.1 35.6 L60.4 33.9 L62.7 32.3 L65.2 30.9 L68.1 30.1 L71.3 29.8 L74.7 30.0 L78.0 30.2 L81.0 30.1 L83.8 29.5 L86.5 28.7 L89.4 28.2 L92.5 28.5" stroke="#ec9860" stroke-width="2.3" fill="none" stroke-linejoin="round"/><path d="M52.5 42.0 L54.9 40.5 L57.3 39.1 L59.8 37.8 L62.4 36.8 L65.4 36.3 L68.5 36.3 L71.7 36.6 L74.7 36.9 L77.7 36.9 L80.5 36.5 L83.2 36.0 L86.1 36.0 L89.2 36.8 L92.5 38.6 L95.7 41.1" stroke="#ec9860" stroke-width="2.3" fill="none" stroke-linejoin="round"/><path d="M53.2 43.2 L55.8 42.2 L58.5 41.5 L61.4 41.3 L64.4 41.5 L67.4 41.9 L70.4 42.3 L73.2 42.3 L76.0 42.2 L78.8 42.1 L81.7 42.6 L84.7 43.8 L87.6 46.0 L90.4 48.5 L93.0 50.9 L95.7 52.7" stroke="#ec9860" stroke-width="2.3" fill="none" stroke-linejoin="round"/><path d="M53.7 44.9 L56.6 44.8 L59.5 45.2 L62.3 45.7 L65.2 46.1 L68.0 46.4 L70.8 46.5 L73.6 46.8 L76.4 47.7 L79.1 49.4 L81.7 51.7 L84.1 54.2 L86.5 56.5 L89.0 58.2 L91.6 59.5 L94.1 60.6" stroke="#ec9860" stroke-width="2.3" fill="none" stroke-linejoin="round"/></g><circle cx="57.0" cy="49.0" r="13.0" fill="#fbf1e8" opacity="0.85"/><path d="M62.0 49.0 L69.4 52.8" stroke="#f2b080" stroke-width="1.1" opacity="0.8"/><path d="M61.8 50.4 L67.8 56.2" stroke="#f2b080" stroke-width="1.1" opacity="0.8"/><path d="M61.2 51.7 L65.4 58.9" stroke="#f2b080" stroke-width="1.1" opacity="0.8"/><path d="M60.3 52.8 L62.2 60.9" stroke="#f2b080" stroke-width="1.1" opacity="0.8"/><path d="M59.1 53.5 L58.7 61.9" stroke="#f2b080" stroke-width="1.1" opacity="0.8"/><path d="M57.7 53.9 L55.0 61.8" stroke="#f2b080" stroke-width="1.1" opacity="0.8"/><path d="M56.3 53.9 L51.4 60.7" stroke="#f2b080" stroke-width="1.1" opacity="0.8"/><path d="M54.9 53.5 L48.3 58.7" stroke="#f2b080" stroke-width="1.1" opacity="0.8"/><path d="M53.7 52.8 L46.0 55.9" stroke="#f2b080" stroke-width="1.1" opacity="0.8"/><path d="M52.8 51.7 L44.5 52.5" stroke="#f2b080" stroke-width="1.1" opacity="0.8"/><path d="M52.2 50.4 L44.0 48.8" stroke="#f2b080" stroke-width="1.1" opacity="0.8"/><path d="M52.0 49.0 L44.6 45.2" stroke="#f2b080" stroke-width="1.1" opacity="0.8"/><path d="M52.2 47.6 L46.2 41.8" stroke="#f2b080" stroke-width="1.1" opacity="0.8"/><path d="M52.8 46.3 L48.6 39.1" stroke="#f2b080" stroke-width="1.1" opacity="0.8"/><path d="M53.7 45.2 L51.8 37.1" stroke="#f2b080" stroke-width="1.1" opacity="0.8"/><path d="M54.9 44.5 L55.3 36.1" stroke="#f2b080" stroke-width="1.1" opacity="0.8"/><path d="M56.3 44.1 L59.0 36.2" stroke="#f2b080" stroke-width="1.1" opacity="0.8"/><path d="M57.7 44.1 L62.6 37.3" stroke="#f2b080" stroke-width="1.1" opacity="0.8"/><path d="M59.1 44.5 L65.7 39.3" stroke="#f2b080" stroke-width="1.1" opacity="0.8"/><path d="M60.3 45.2 L68.0 42.1" stroke="#f2b080" stroke-width="1.1" opacity="0.8"/><path d="M61.2 46.3 L69.5 45.5" stroke="#f2b080" stroke-width="1.1" opacity="0.8"/><path d="M61.8 47.6 L70.0 49.2" stroke="#f2b080" stroke-width="1.1" opacity="0.8"/><path d="M14.0 22.0 q5 3 9 10" stroke="#efa26a" stroke-width="1.8" fill="none" opacity="0.7"/><path d="M15.5 30.0 q5 3 9 10" stroke="#efa26a" stroke-width="1.8" fill="none" opacity="0.7"/><path d="M17.0 38.0 q5 3 9 10" stroke="#efa26a" stroke-width="1.8" fill="none" opacity="0.7"/><path d="M18.5 46.0 q5 3 9 10" stroke="#efa26a" stroke-width="1.8" fill="none" opacity="0.7"/><path d="M20.0 54.0 q5 3 9 10" stroke="#efa26a" stroke-width="1.8" fill="none" opacity="0.7"/><path d="M11 72 C20 66 28 58 34 57 C45 62 60 66 70 65 C80 63 88 62 92 63 C91 72 80 78 60 79.5 C40 80.5 20 78 11 72Z" fill="url(#sand2)"/><ellipse cx="53.5" cy="45.0" rx="4.5" ry="3.2" fill="#fbf6f0"/><path d="M49.0 46.5 q4 -4.5 8 -2.5 l-0.5 3.5 q-4 1.5 -7.5 -1z" fill="#a8b4c0"/></g><text x="90.0" y="49" font-family="Liberation Sans" font-size="54" fill="#157a3b" stroke="#157a3b" stroke-width="1.1" textLength="27" lengthAdjust="spacingAndGlyphs" transform="skewX(-6) translate(5,0)">宜</text><text x="120.3" y="49" font-family="Liberation Sans" font-size="54" fill="#157a3b" stroke="#157a3b" stroke-width="1.1" textLength="27" lengthAdjust="spacingAndGlyphs" transform="skewX(-6) translate(5,0)">立</text><text x="151.7" y="49" font-family="Liberation Sans" font-size="54" fill="#157a3b" stroke="#157a3b" stroke-width="1.1" textLength="27" lengthAdjust="spacingAndGlyphs" transform="skewX(-6) translate(5,0)">方</text><text x="184.2" y="49" font-family="Liberation Sans" font-size="54" fill="#157a3b" stroke="#157a3b" stroke-width="1.1" textLength="27" lengthAdjust="spacingAndGlyphs" transform="skewX(-6) translate(5,0)">商</text><text x="215.6" y="49" font-family="Liberation Sans" font-size="54" fill="#157a3b" stroke="#157a3b" stroke-width="1.1" textLength="27" lengthAdjust="spacingAndGlyphs" transform="skewX(-6) translate(5,0)">城</text><text x="90" y="73.8" font-family="Liberation Sans" font-size="22" fill="#157a3b" textLength="152" lengthAdjust="spacingAndGlyphs">www.e3mall.cn</text></svg>
<div class="a" style="left:108px;top:878px;font-size:25px;line-height:32px;font-weight:bold;color:#666">4008-888-888</div>
<div class="a" style="left:108px;top:913px;font-size:15px;line-height:20px;color:#888">周一至周日9:00-22:00</div>

<div class="fh" style="left:408px">购物指南</div>
<div class="fi" style="left:408px;top:820px">积分制度<br>会员介绍<br>购物流程<br>常见问题</div>
<div class="fh" style="left:558px">配送服务</div>
<div class="fi" style="left:558px;top:820px">配送政策<br>开箱验货<br>配送运费<br>配送范围</div>
<div class="fh" style="left:708px">支付方式</div>
<div class="fi" style="left:708px;top:820px">货到付款<br>在线支付<br>优选卡<br>发票制度</div>
<div class="fh" style="left:858px">售后服务</div>
<div class="fi" style="left:858px;top:820px">退款说明<br>退换货流程<br>退换货政策<br>隐私条款</div>
<div class="fh c" style="left:1033px;width:100px">手机客户端</div>
<div class="fh c" style="left:1195px;width:100px">官方微信</div>
<div class="a" style="left:1033.0px;top:828.3px;width:99.7px;height:99.1px;border:1px solid #f0f0f0;background:#fff"></div><svg class="a" style="left:1036.30px;top:830.90px" width="93.09" height="93.09" viewBox="0 0 29 29"><g fill="#000"><rect x="0" y="0" width="7.04" height="1.06"/><rect x="8" y="0" width="1.04" height="1.06"/><rect x="14" y="0" width="1.04" height="1.06"/><rect x="16" y="0" width="3.04" height="1.06"/><rect x="22" y="0" width="7.04" height="1.06"/><rect x="0" y="1" width="1.04" height="1.06"/><rect x="6" y="1" width="1.04" height="1.06"/><rect x="9" y="1" width="1.04" height="1.06"/><rect x="12" y="1" width="1.04" height="1.06"/><rect x="14" y="1" width="3.04" height="1.06"/><rect x="18" y="1" width="1.04" height="1.06"/><rect x="22" y="1" width="1.04" height="1.06"/><rect x="28" y="1" width="1.04" height="1.06"/><rect x="0" y="2" width="1.04" height="1.06"/><rect x="2" y="2" width="3.04" height="1.06"/><rect x="6" y="2" width="1.04" height="1.06"/><rect x="9" y="2" width="4.04" height="1.06"/><rect x="14" y="2" width="3.04" height="1.06"/><rect x="18" y="2" width="2.04" height="1.06"/><rect x="22" y="2" width="1.04" height="1.06"/><rect x="24" y="2" width="3.04" height="1.06"/><rect x="28" y="2" width="1.04" height="1.06"/><rect x="0" y="3" width="1.04" height="1.06"/><rect x="2" y="3" width="3.04" height="1.06"/><rect x="6" y="3" width="1.04" height="1.06"/><rect x="8" y="3" width="1.04" height="1.06"/><rect x="10" y="3" width="1.04" height="1.06"/><rect x="13" y="3" width="2.04" height="1.06"/><rect x="16" y="3" width="1.04" height="1.06"/><rect x="18" y="3" width="1.04" height="1.06"/><rect x="22" y="3" width="1.04" height="1.06"/><rect x="24" y="3" width="3.04" height="1.06"/><rect x="28" y="3" width="1.04" height="1.06"/><rect x="0" y="4" width="1.04" height="1.06"/><rect x="2" y="4" width="3.04" height="1.06"/><rect x="6" y="4" width="1.04" height="1.06"/><rect x="9" y="4" width="1.04" height="1.06"/><rect x="11" y="4" width="1.04" height="1.06"/><rect x="14" y="4" width="1.04" height="1.06"/><rect x="18" y="4" width="3.04" height="1.06"/><rect x="22" y="4" width="1.04" height="1.06"/><rect x="24" y="4" width="3.04" height="1.06"/><rect x="28" y="4" width="1.04" height="1.06"/><rect x="0" y="5" width="1.04" height="1.06"/><rect x="6" y="5" width="1.04" height="1.06"/><rect x="9" y="5" width="5.04" height="1.06"/><rect x="17" y="5" width="1.04" height="1.06"/><rect x="19" y="5" width="2.04" height="1.06"/><rect x="22" y="5" width="1.04" height="1.06"/><rect x="28" y="5" width="1.04" height="1.06"/><rect x="0" y="6" width="7.04" height="1.06"/><rect x="8" y="6" width="1.04" height="1.06"/><rect x="10" y="6" width="1.04" height="1.06"/><rect x="12" y="6" width="1.04" height="1.06"/><rect x="14" y="6" width="1.04" height="1.06"/><rect x="16" y="6" width="1.04" height="1.06"/><rect x="18" y="6" width="1.04" height="1.06"/><rect x="20" y="6" width="1.04" height="1.06"/><rect x="22" y="6" width="7.04" height="1.06"/><rect x="9" y="7" width="2.04" height="1.06"/><rect x="14" y="7" width="5.04" height="1.06"/><rect x="20" y="7" width="1.04" height="1.06"/><rect x="2" y="8" width="1.04" height="1.06"/><rect x="4" y="8" width="3.04" height="1.06"/><rect x="8" y="8" width="4.04" height="1.06"/><rect x="13" y="8" width="1.04" height="1.06"/><rect x="16" y="8" width="1.04" height="1.06"/><rect x="18" y="8" width="1.04" height="1.06"/><rect x="21" y="8" width="1.04" height="1.06"/><rect x="25" y="8" width="1.04" height="1.06"/><rect x="28" y="8" width="1.04" height="1.06"/><rect x="2" y="9" width="2.04" height="1.06"/><rect x="7" y="9" width="2.04" height="1.06"/><rect x="10" y="9" width="1.04" height="1.06"/><rect x="16" y="9" width="1.04" height="1.06"/><rect x="18" y="9" width="2.04" height="1.06"/><rect x="21" y="9" width="2.04" height="1.06"/><rect x="25" y="9" width="1.04" height="1.06"/><rect x="28" y="9" width="1.04" height="1.06"/><rect x="0" y="10" width="1.04" height="1.06"/><rect x="3" y="10" width="1.04" height="1.06"/><rect x="5" y="10" width="8.04" height="1.06"/><rect x="18" y="10" width="1.04" height="1.06"/><rect x="21" y="10" width="1.04" height="1.06"/><rect x="25" y="10" width="4.04" height="1.06"/><rect x="0" y="11" width="2.04" height="1.06"/><rect x="5" y="11" width="1.04" height="1.06"/><rect x="8" y="11" width="1.04" height="1.06"/><rect x="11" y="11" width="1.04" height="1.06"/><rect x="13" y="11" width="1.04" height="1.06"/><rect x="17" y="11" width="3.04" height="1.06"/><rect x="22" y="11" width="1.04" height="1.06"/><rect x="24" y="11" width="1.04" height="1.06"/><rect x="27" y="11" width="1.04" height="1.06"/><rect x="0" y="12" width="1.04" height="1.06"/><rect x="3" y="12" width="2.04" height="1.06"/><rect x="6" y="12" width="1.04" height="1.06"/><rect x="9" y="12" width="4.04" height="1.06"/><rect x="16" y="12" width="1.04" height="1.06"/><rect x="18" y="12" width="1.04" height="1.06"/><rect x="22" y="12" width="1.04" height="1.06"/><rect x="0" y="13" width="1.04" height="1.06"/><rect x="11" y="13" width="1.04" height="1.06"/><rect x="13" y="13" width="1.04" height="1.06"/><rect x="16" y="13" width="2.04" height="1.06"/><rect x="20" y="13" width="4.04" height="1.06"/><rect x="27" y="13" width="2.04" height="1.06"/><rect x="0" y="14" width="2.04" height="1.06"/><rect x="3" y="14" width="2.04" height="1.06"/><rect x="6" y="14" width="1.04" height="1.06"/><rect x="10" y="14" width="1.04" height="1.06"/><rect x="15" y="14" width="4.04" height="1.06"/><rect x="22" y="14" width="1.04" height="1.06"/><rect x="26" y="14" width="3.04" height="1.06"/><rect x="2" y="15" width="4.04" height="1.06"/><rect x="7" y="15" width="1.04" height="1.06"/><rect x="9" y="15" width="1.04" height="1.06"/><rect x="12" y="15" width="1.04" height="1.06"/><rect x="14" y="15" width="1.04" height="1.06"/><rect x="18" y="15" width="1.04" height="1.06"/><rect x="20" y="15" width="1.04" height="1.06"/><rect x="22" y="15" width="3.04" height="1.06"/><rect x="28" y="15" width="1.04" height="1.06"/><rect x="4" y="16" width="1.04" height="1.06"/><rect x="6" y="16" width="1.04" height="1.06"/><rect x="11" y="16" width="8.04" height="1.06"/><rect x="20" y="16" width="3.04" height="1.06"/><rect x="25" y="16" width="1.04" height="1.06"/><rect x="28" y="16" width="1.04" height="1.06"/><rect x="1" y="17" width="2.04" height="1.06"/><rect x="11" y="17" width="1.04" height="1.06"/><rect x="13" y="17" width="1.04" height="1.06"/><rect x="16" y="17" width="1.04" height="1.06"/><rect x="18" y="17" width="6.04" height="1.06"/><rect x="25" y="17" width="1.04" height="1.06"/><rect x="27" y="17" width="2.04" height="1.06"/><rect x="0" y="18" width="1.04" height="1.06"/><rect x="2" y="18" width="1.04" height="1.06"/><rect x="6" y="18" width="3.04" height="1.06"/><rect x="12" y="18" width="1.04" height="1.06"/><rect x="15" y="18" width="1.04" height="1.06"/><rect x="17" y="18" width="1.04" height="1.06"/><rect x="19" y="18" width="3.04" height="1.06"/><rect x="24" y="18" width="5.04" height="1.06"/><rect x="1" y="19" width="1.04" height="1.06"/><rect x="4" y="19" width="1.04" height="1.06"/><rect x="7" y="19" width="1.04" height="1.06"/><rect x="9" y="19" width="4.04" height="1.06"/><rect x="14" y="19" width="1.04" height="1.06"/><rect x="16" y="19" width="3.04" height="1.06"/><rect x="20" y="19" width="1.04" height="1.06"/><rect x="22" y="19" width="1.04" height="1.06"/><rect x="24" y="19" width="1.04" height="1.06"/><rect x="27" y="19" width="1.04" height="1.06"/><rect x="0" y="20" width="1.04" height="1.06"/><rect x="3" y="20" width="4.04" height="1.06"/><rect x="9" y="20" width="2.04" height="1.06"/><rect x="12" y="20" width="2.04" height="1.06"/><rect x="15" y="20" width="1.04" height="1.06"/><rect x="17" y="20" width="8.04" height="1.06"/><rect x="27" y="20" width="2.04" height="1.06"/><rect x="8" y="21" width="4.04" height="1.06"/><rect x="13" y="21" width="1.04" height="1.06"/><rect x="16" y="21" width="1.04" height="1.06"/><rect x="20" y="21" width="1.04" height="1.06"/><rect x="24" y="21" width="1.04" height="1.06"/><rect x="28" y="21" width="1.04" height="1.06"/><rect x="0" y="22" width="7.04" height="1.06"/><rect x="9" y="22" width="1.04" height="1.06"/><rect x="12" y="22" width="1.04" height="1.06"/><rect x="15" y="22" width="6.04" height="1.06"/><rect x="22" y="22" width="1.04" height="1.06"/><rect x="24" y="22" width="1.04" height="1.06"/><rect x="26" y="22" width="1.04" height="1.06"/><rect x="28" y="22" width="1.04" height="1.06"/><rect x="0" y="23" width="1.04" height="1.06"/><rect x="6" y="23" width="1.04" height="1.06"/><rect x="8" y="23" width="7.04" height="1.06"/><rect x="16" y="23" width="2.04" height="1.06"/><rect x="20" y="23" width="1.04" height="1.06"/><rect x="24" y="23" width="1.04" height="1.06"/><rect x="0" y="24" width="1.04" height="1.06"/><rect x="2" y="24" width="3.04" height="1.06"/><rect x="6" y="24" width="1.04" height="1.06"/><rect x="8" y="24" width="1.04" height="1.06"/><rect x="10" y="24" width="1.04" height="1.06"/><rect x="12" y="24" width="1.04" height="1.06"/><rect x="14" y="24" width="1.04" height="1.06"/><rect x="16" y="24" width="1.04" height="1.06"/><rect x="20" y="24" width="6.04" height="1.06"/><rect x="27" y="24" width="2.04" height="1.06"/><rect x="0" y="25" width="1.04" height="1.06"/><rect x="2" y="25" width="3.04" height="1.06"/><rect x="6" y="25" width="1.04" height="1.06"/><rect x="10" y="25" width="2.04" height="1.06"/><rect x="13" y="25" width="2.04" height="1.06"/><rect x="18" y="25" width="1.04" height="1.06"/><rect x="20" y="25" width="1.04" height="1.06"/><rect x="24" y="25" width="1.04" height="1.06"/><rect x="26" y="25" width="1.04" height="1.06"/><rect x="0" y="26" width="1.04" height="1.06"/><rect x="2" y="26" width="3.04" height="1.06"/><rect x="6" y="26" width="1.04" height="1.06"/><rect x="8" y="26" width="4.04" height="1.06"/><rect x="13" y="26" width="1.04" height="1.06"/><rect x="15" y="26" width="3.04" height="1.06"/><rect x="19" y="26" width="3.04" height="1.06"/><rect x="24" y="26" width="1.04" height="1.06"/><rect x="26" y="26" width="1.04" height="1.06"/><rect x="28" y="26" width="1.04" height="1.06"/><rect x="0" y="27" width="1.04" height="1.06"/><rect x="6" y="27" width="1.04" height="1.06"/><rect x="9" y="27" width="1.04" height="1.06"/><rect x="11" y="27" width="1.04" height="1.06"/><rect x="14" y="27" width="2.04" height="1.06"/><rect x="17" y="27" width="3.04" height="1.06"/><rect x="22" y="27" width="2.04" height="1.06"/><rect x="27" y="27" width="1.04" height="1.06"/><rect x="0" y="28" width="7.04" height="1.06"/></g></svg>
<div class="a" style="left:1193.0px;top:828.3px;width:99.7px;height:99.1px;border:1px solid #f0f0f0;background:#fff"></div><svg class="a" style="left:1196.25px;top:830.90px" width="93.09" height="93.09" viewBox="0 0 29 29"><g fill="#000"><rect x="0" y="0" width="7.04" height="1.06"/><rect x="8" y="0" width="1.04" height="1.06"/><rect x="14" y="0" width="1.04" height="1.06"/><rect x="16" y="0" width="3.04" height="1.06"/><rect x="22" y="0" width="7.04" height="1.06"/><rect x="0" y="1" width="1.04" height="1.06"/><rect x="6" y="1" width="1.04" height="1.06"/><rect x="9" y="1" width="1.04" height="1.06"/><rect x="12" y="1" width="1.04" height="1.06"/><rect x="14" y="1" width="3.04" height="1.06"/><rect x="18" y="1" width="1.04" height="1.06"/><rect x="22" y="1" width="1.04" height="1.06"/><rect x="28" y="1" width="1.04" height="1.06"/><rect x="0" y="2" width="1.04" height="1.06"/><rect x="2" y="2" width="3.04" height="1.06"/><rect x="6" y="2" width="1.04" height="1.06"/><rect x="9" y="2" width="4.04" height="1.06"/><rect x="14" y="2" width="3.04" height="1.06"/><rect x="18" y="2" width="2.04" height="1.06"/><rect x="22" y="2" width="1.04" height="1.06"/><rect x="24" y="2" width="3.04" height="1.06"/><rect x="28" y="2" width="1.04" height="1.06"/><rect x="0" y="3" width="1.04" height="1.06"/><rect x="2" y="3" width="3.04" height="1.06"/><rect x="6" y="3" width="1.04" height="1.06"/><rect x="8" y="3" width="1.04" height="1.06"/><rect x="10" y="3" width="1.04" height="1.06"/><rect x="13" y="3" width="2.04" height="1.06"/><rect x="16" y="3" width="1.04" height="1.06"/><rect x="18" y="3" width="1.04" height="1.06"/><rect x="22" y="3" width="1.04" height="1.06"/><rect x="24" y="3" width="3.04" height="1.06"/><rect x="28" y="3" width="1.04" height="1.06"/><rect x="0" y="4" width="1.04" height="1.06"/><rect x="2" y="4" width="3.04" height="1.06"/><rect x="6" y="4" width="1.04" height="1.06"/><rect x="9" y="4" width="1.04" height="1.06"/><rect x="11" y="4" width="1.04" height="1.06"/><rect x="14" y="4" width="1.04" height="1.06"/><rect x="18" y="4" width="3.04" height="1.06"/><rect x="22" y="4" width="1.04" height="1.06"/><rect x="24" y="4" width="3.04" height="1.06"/><rect x="28" y="4" width="1.04" height="1.06"/><rect x="0" y="5" width="1.04" height="1.06"/><rect x="6" y="5" width="1.04" height="1.06"/><rect x="9" y="5" width="5.04" height="1.06"/><rect x="17" y="5" width="1.04" height="1.06"/><rect x="19" y="5" width="2.04" height="1.06"/><rect x="22" y="5" width="1.04" height="1.06"/><rect x="28" y="5" width="1.04" height="1.06"/><rect x="0" y="6" width="7.04" height="1.06"/><rect x="8" y="6" width="1.04" height="1.06"/><rect x="10" y="6" width="1.04" height="1.06"/><rect x="12" y="6" width="1.04" height="1.06"/><rect x="14" y="6" width="1.04" height="1.06"/><rect x="16" y="6" width="1.04" height="1.06"/><rect x="18" y="6" width="1.04" height="1.06"/><rect x="20" y="6" width="1.04" height="1.06"/><rect x="22" y="6" width="7.04" height="1.06"/><rect x="9" y="7" width="2.04" height="1.06"/><rect x="14" y="7" width="5.04" height="1.06"/><rect x="20" y="7" width="1.04" height="1.06"/><rect x="2" y="8" width="1.04" height="1.06"/><rect x="4" y="8" width="3.04" height="1.06"/><rect x="8" y="8" width="4.04" height="1.06"/><rect x="13" y="8" width="1.04" height="1.06"/><rect x="16" y="8" width="1.04" height="1.06"/><rect x="18" y="8" width="1.04" height="1.06"/><rect x="21" y="8" width="1.04" height="1.06"/><rect x="25" y="8" width="1.04" height="1.06"/><rect x="28" y="8" width="1.04" height="1.06"/><rect x="2" y="9" width="2.04" height="1.06"/><rect x="7" y="9" width="2.04" height="1.06"/><rect x="10" y="9" width="1.04" height="1.06"/><rect x="16" y="9" width="1.04" height="1.06"/><rect x="18" y="9" width="2.04" height="1.06"/><rect x="21" y="9" width="2.04" height="1.06"/><rect x="25" y="9" width="1.04" height="1.06"/><rect x="28" y="9" width="1.04" height="1.06"/><rect x="0" y="10" width="1.04" height="1.06"/><rect x="3" y="10" width="1.04" height="1.06"/><rect x="5" y="10" width="8.04" height="1.06"/><rect x="18" y="10" width="1.04" height="1.06"/><rect x="21" y="10" width="1.04" height="1.06"/><rect x="25" y="10" width="4.04" height="1.06"/><rect x="0" y="11" width="2.04" height="1.06"/><rect x="5" y="11" width="1.04" height="1.06"/><rect x="8" y="11" width="1.04" height="1.06"/><rect x="11" y="11" width="1.04" height="1.06"/><rect x="13" y="11" width="1.04" height="1.06"/><rect x="17" y="11" width="3.04" height="1.06"/><rect x="22" y="11" width="1.04" height="1.06"/><rect x="24" y="11" width="1.04" height="1.06"/><rect x="27" y="11" width="1.04" height="1.06"/><rect x="0" y="12" width="1.04" height="1.06"/><rect x="3" y="12" width="2.04" height="1.06"/><rect x="6" y="12" width="1.04" height="1.06"/><rect x="9" y="12" width="4.04" height="1.06"/><rect x="16" y="12" width="1.04" height="1.06"/><rect x="18" y="12" width="1.04" height="1.06"/><rect x="22" y="12" width="1.04" height="1.06"/><rect x="0" y="13" width="1.04" height="1.06"/><rect x="11" y="13" width="1.04" height="1.06"/><rect x="13" y="13" width="1.04" height="1.06"/><rect x="16" y="13" width="2.04" height="1.06"/><rect x="20" y="13" width="4.04" height="1.06"/><rect x="27" y="13" width="2.04" height="1.06"/><rect x="0" y="14" width="2.04" height="1.06"/><rect x="3" y="14" width="2.04" height="1.06"/><rect x="6" y="14" width="1.04" height="1.06"/><rect x="10" y="14" width="1.04" height="1.06"/><rect x="15" y="14" width="4.04" height="1.06"/><rect x="22" y="14" width="1.04" height="1.06"/><rect x="26" y="14" width="3.04" height="1.06"/><rect x="2" y="15" width="4.04" height="1.06"/><rect x="7" y="15" width="1.04" height="1.06"/><rect x="9" y="15" width="1.04" height="1.06"/><rect x="12" y="15" width="1.04" height="1.06"/><rect x="14" y="15" width="1.04" height="1.06"/><rect x="18" y="15" width="1.04" height="1.06"/><rect x="20" y="15" width="1.04" height="1.06"/><rect x="22" y="15" width="3.04" height="1.06"/><rect x="28" y="15" width="1.04" height="1.06"/><rect x="4" y="16" width="1.04" height="1.06"/><rect x="6" y="16" width="1.04" height="1.06"/><rect x="11" y="16" width="8.04" height="1.06"/><rect x="20" y="16" width="3.04" height="1.06"/><rect x="25" y="16" width="1.04" height="1.06"/><rect x="28" y="16" width="1.04" height="1.06"/><rect x="1" y="17" width="2.04" height="1.06"/><rect x="11" y="17" width="1.04" height="1.06"/><rect x="13" y="17" width="1.04" height="1.06"/><rect x="16" y="17" width="1.04" height="1.06"/><rect x="18" y="17" width="6.04" height="1.06"/><rect x="25" y="17" width="1.04" height="1.06"/><rect x="27" y="17" width="2.04" height="1.06"/><rect x="0" y="18" width="1.04" height="1.06"/><rect x="2" y="18" width="1.04" height="1.06"/><rect x="6" y="18" width="3.04" height="1.06"/><rect x="12" y="18" width="1.04" height="1.06"/><rect x="15" y="18" width="1.04" height="1.06"/><rect x="17" y="18" width="1.04" height="1.06"/><rect x="19" y="18" width="3.04" height="1.06"/><rect x="24" y="18" width="5.04" height="1.06"/><rect x="1" y="19" width="1.04" height="1.06"/><rect x="4" y="19" width="1.04" height="1.06"/><rect x="7" y="19" width="1.04" height="1.06"/><rect x="9" y="19" width="4.04" height="1.06"/><rect x="14" y="19" width="1.04" height="1.06"/><rect x="16" y="19" width="3.04" height="1.06"/><rect x="20" y="19" width="1.04" height="1.06"/><rect x="22" y="19" width="1.04" height="1.06"/><rect x="24" y="19" width="1.04" height="1.06"/><rect x="27" y="19" width="1.04" height="1.06"/><rect x="0" y="20" width="1.04" height="1.06"/><rect x="3" y="20" width="4.04" height="1.06"/><rect x="9" y="20" width="2.04" height="1.06"/><rect x="12" y="20" width="2.04" height="1.06"/><rect x="15" y="20" width="1.04" height="1.06"/><rect x="17" y="20" width="8.04" height="1.06"/><rect x="27" y="20" width="2.04" height="1.06"/><rect x="8" y="21" width="4.04" height="1.06"/><rect x="13" y="21" width="1.04" height="1.06"/><rect x="16" y="21" width="1.04" height="1.06"/><rect x="20" y="21" width="1.04" height="1.06"/><rect x="24" y="21" width="1.04" height="1.06"/><rect x="28" y="21" width="1.04" height="1.06"/><rect x="0" y="22" width="7.04" height="1.06"/><rect x="9" y="22" width="1.04" height="1.06"/><rect x="12" y="22" width="1.04" height="1.06"/><rect x="15" y="22" width="6.04" height="1.06"/><rect x="22" y="22" width="1.04" height="1.06"/><rect x="24" y="22" width="1.04" height="1.06"/><rect x="26" y="22" width="1.04" height="1.06"/><rect x="28" y="22" width="1.04" height="1.06"/><rect x="0" y="23" width="1.04" height="1.06"/><rect x="6" y="23" width="1.04" height="1.06"/><rect x="8" y="23" width="7.04" height="1.06"/><rect x="16" y="23" width="2.04" height="1.06"/><rect x="20" y="23" width="1.04" height="1.06"/><rect x="24" y="23" width="1.04" height="1.06"/><rect x="0" y="24" width="1.04" height="1.06"/><rect x="2" y="24" width="3.04" height="1.06"/><rect x="6" y="24" width="1.04" height="1.06"/><rect x="8" y="24" width="1.04" height="1.06"/><rect x="10" y="24" width="1.04" height="1.06"/><rect x="12" y="24" width="1.04" height="1.06"/><rect x="14" y="24" width="1.04" height="1.06"/><rect x="16" y="24" width="1.04" height="1.06"/><rect x="20" y="24" width="6.04" height="1.06"/><rect x="27" y="24" width="2.04" height="1.06"/><rect x="0" y="25" width="1.04" height="1.06"/><rect x="2" y="25" width="3.04" height="1.06"/><rect x="6" y="25" width="1.04" height="1.06"/><rect x="10" y="25" width="2.04" height="1.06"/><rect x="13" y="25" width="2.04" height="1.06"/><rect x="18" y="25" width="1.04" height="1.06"/><rect x="20" y="25" width="1.04" height="1.06"/><rect x="24" y="25" width="1.04" height="1.06"/><rect x="26" y="25" width="1.04" height="1.06"/><rect x="0" y="26" width="1.04" height="1.06"/><rect x="2" y="26" width="3.04" height="1.06"/><rect x="6" y="26" width="1.04" height="1.06"/><rect x="8" y="26" width="4.04" height="1.06"/><rect x="13" y="26" width="1.04" height="1.06"/><rect x="15" y="26" width="3.04" height="1.06"/><rect x="19" y="26" width="3.04" height="1.06"/><rect x="24" y="26" width="1.04" height="1.06"/><rect x="26" y="26" width="1.04" height="1.06"/><rect x="28" y="26" width="1.04" height="1.06"/><rect x="0" y="27" width="1.04" height="1.06"/><rect x="6" y="27" width="1.04" height="1.06"/><rect x="9" y="27" width="1.04" height="1.06"/><rect x="11" y="27" width="1.04" height="1.06"/><rect x="14" y="27" width="2.04" height="1.06"/><rect x="17" y="27" width="3.04" height="1.06"/><rect x="22" y="27" width="2.04" height="1.06"/><rect x="27" y="27" width="1.04" height="1.06"/><rect x="0" y="28" width="7.04" height="1.06"/></g></svg>

</body></html>
